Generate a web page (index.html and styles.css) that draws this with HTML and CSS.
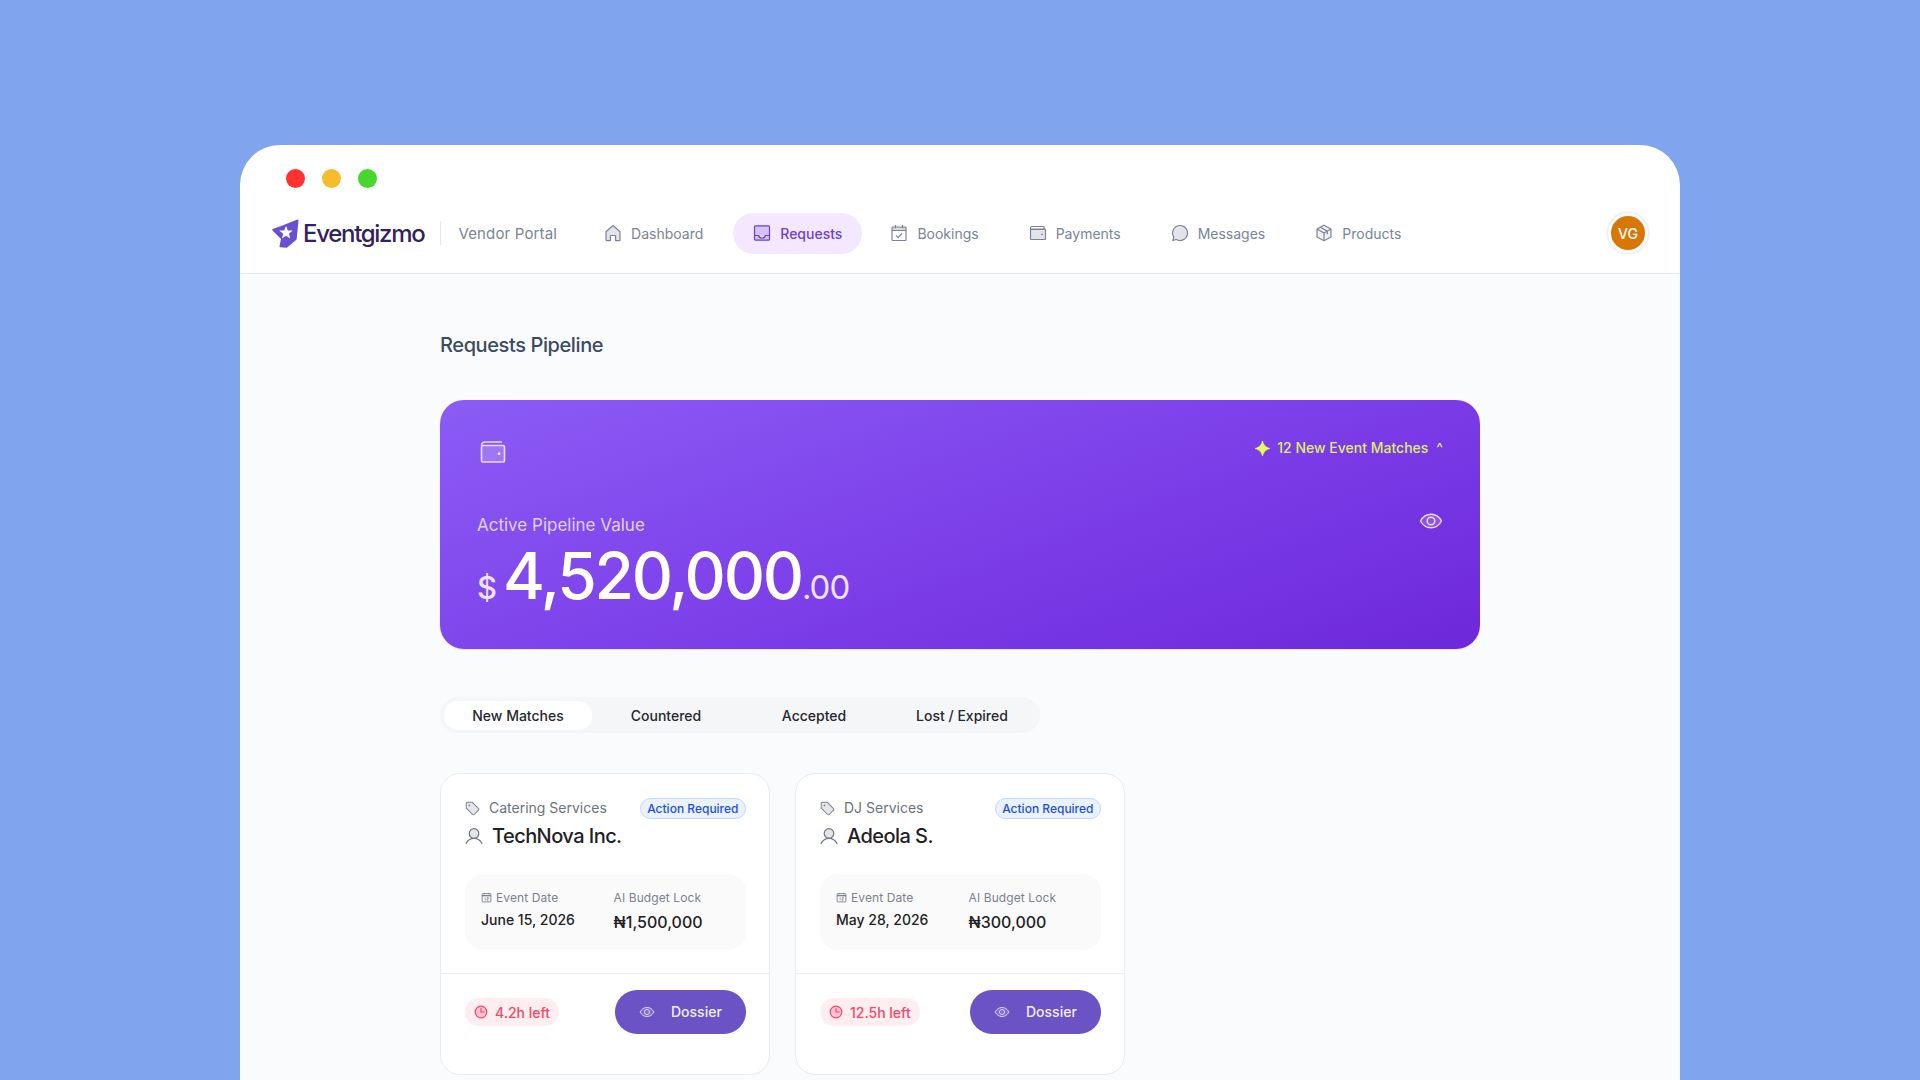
FILE: index.html
```html
<!DOCTYPE html>
<html lang="en">
<head>
<meta charset="utf-8">
<title>Eventgizmo Vendor Portal</title>
<link rel="stylesheet" href="styles.css">
</head>
<body>
<svg class="defs" width="0" height="0" aria-hidden="true">
  <symbol id="i-eye" viewBox="0 0 24 24"><path d="M1.5 12C4 7.5 7.7 5.2 12 5.2S20 7.5 22.500 12C20 16.500 16.300 18.800 12 18.800S4 16.500 1.500 12Z" fill="currentColor" fill-opacity=".2" stroke="currentColor" stroke-width="1.500" stroke-linejoin="round"/><circle cx="12" cy="12" r="3.800" fill="none" stroke="currentColor" stroke-width="1.500"/></symbol>
  <symbol id="i-tag" viewBox="0 0 16 16"><path d="M1.300 2.300a1 1 0 0 1 1-1h5.300l6.800 6.800a1.200 1.200 0 0 1 0 1.700l-4.600 4.600a1.200 1.200 0 0 1-1.700 0L1.300 7.600Z" fill="currentColor" fill-opacity=".2" stroke="currentColor" stroke-width="1.100" stroke-linejoin="round"/><circle cx="4.700" cy="4.700" r=".9" fill="currentColor"/></symbol>
  <symbol id="i-user" viewBox="0 0 18 18"><circle cx="9" cy="6.500" r="4.800" fill="currentColor" fill-opacity=".2" stroke="currentColor" stroke-width="1.200"/><path d="M1 16.500C2.500 13.500 5.500 11.300 9 11.300S15.500 13.500 17 16.500" fill="none" stroke="currentColor" stroke-width="1.200" stroke-linecap="round"/></symbol>
  <symbol id="i-cal" viewBox="0 0 12 12"><rect x="1.200" y="1.800" width="9.600" height="9" rx=".6" fill="none" stroke="currentColor"/><path d="M1.200 4h9.600" stroke="currentColor" stroke-width="1.400"/><path d="M3.500.8v2M8.500.8v2M4.500 6v3M6.500 6h1.500v1.500H6.500V9H8" fill="none" stroke="currentColor" stroke-width=".8"/></symbol>
  <symbol id="i-clock" viewBox="0 0 14 14"><circle cx="7" cy="7" r="5.800" fill="currentColor" fill-opacity=".25" stroke="currentColor" stroke-width="1.200"/><path d="M7 3.600V7h3.200" fill="none" stroke="currentColor" stroke-width="1.200" stroke-linecap="round" stroke-linejoin="round"/></symbol>
</svg>
<div class="window">
  <div class="titlebar">
    <span class="dot dot-red"></span>
    <span class="dot dot-yellow"></span>
    <span class="dot dot-green"></span>
  </div>
  <header class="topnav">
    <div class="brand">
      <svg class="logo" width="27" height="29" viewBox="0 0 26 28"><path d="M1 10.500 9 7.500 24.800 1.200 23 19.500 14 27 8 26.500 9.500 19Z" fill="#6b4fd3" stroke="#6b4fd3" stroke-width="1.600" stroke-linejoin="round"/><path d="M13.500 6.500 15.200 11 20 11.200 16.300 14.200 17.600 18.900 13.500 16.200 9.500 18.900 10.800 14.200 7 11.200 11.800 11Z" fill="#fff"/></svg>
      <span class="brand-name">Eventgizmo</span>
    </div>
    <span class="brand-sep"></span>
    <span class="portal">Vendor Portal</span>
    <nav class="nav">
      <a class="nav-item"><svg class="nav-icon" viewBox="0 0 18 18"><path d="M2 7.800 9 1.500l7 6.300V16a.6.6 0 0 1-.6.600H11.600V11.500H6.400v5.100H2.600A.6.600 0 0 1 2 16Z" fill="currentColor" fill-opacity=".22" stroke="currentColor" stroke-width="1.200" stroke-linejoin="round"/></svg>Dashboard</a>
      <a class="nav-item is-active"><svg class="nav-icon" viewBox="0 0 18 18"><rect x="1.500" y="1.800" width="15" height="14.400" rx="1" fill="currentColor" fill-opacity=".22" stroke="currentColor" stroke-width="1.200"/><path d="M1.500 11.500H5.500C6 13.300 7.300 14 9 14s3-.7 3.500-2.500h4" fill="#f3e8ff" stroke="currentColor" stroke-width="1.200"/></svg>Requests</a>
      <a class="nav-item"><svg class="nav-icon" viewBox="0 0 18 18"><rect x="2" y="3" width="14" height="13.500" rx=".8" fill="none" stroke="currentColor" stroke-width="1.200"/><path d="M2 3h14v3.500H2Z" fill="currentColor" fill-opacity=".3"/><path d="M5.500 1v3.200M12.500 1v3.200M2 6.500h14" stroke="currentColor" stroke-width="1.200"/><path d="M6 11.300 8.200 13.500 12 9.500" fill="none" stroke="currentColor" stroke-width="1.100"/></svg>Bookings</a>
      <a class="nav-item"><svg class="nav-icon" viewBox="0 0 18 18"><path d="M1.500 4A1.500 1.500 0 0 1 3 2.500h12v3H1.500Z" fill="none" stroke="currentColor" stroke-width="1.200"/><rect x="1.500" y="5" width="15" height="10.500" rx=".8" fill="currentColor" fill-opacity=".22" stroke="currentColor" stroke-width="1.200"/><circle cx="13" cy="10.300" r=".9" fill="currentColor"/></svg>Payments</a>
      <a class="nav-item"><svg class="nav-icon" viewBox="0 0 18 18"><path d="M9 1.500a7.500 7.500 0 1 1-3.700 14L1.800 16.500l1-3.400A7.500 7.500 0 0 1 9 1.500Z" fill="currentColor" fill-opacity=".22" stroke="currentColor" stroke-width="1.200" stroke-linejoin="round"/></svg>Messages</a>
      <a class="nav-item"><svg class="nav-icon" viewBox="0 0 18 18"><path d="M9 1.200 16 5v8L9 16.800 2 13V5Z" fill="currentColor" fill-opacity=".12" stroke="currentColor" stroke-width="1.200" stroke-linejoin="round"/><path d="M2 5 9 9l7-4M9 9v7.800M5.300 3.200l7 4v3" fill="none" stroke="currentColor" stroke-width="1.200"/></svg>Products</a>
    </nav>
    <div class="avatar">VG</div>
  </header>
  <main class="content">
    <h1 class="page-title">Requests Pipeline</h1>
    <section class="hero">
      <div class="hero-top">
        <svg class="hero-wallet" width="26" height="24" viewBox="0 0 26 24"><path d="M1.500 5.500A3.500 3.500 0 0 1 5 2h17" fill="none" stroke="#e9ddff" stroke-width="1.600"/><rect x="1.500" y="5.500" width="23" height="16.500" rx="1.400" fill="#fff" fill-opacity=".2" stroke="#e9ddff" stroke-width="1.600"/><circle cx="19" cy="13.700" r="1.300" fill="#fff"/></svg>
        <div class="matches">
          <svg width="15" height="15" viewBox="0 0 14 14"><path d="M7 0C7.800 3.800 10.200 6.200 14 7 10.200 7.800 7.800 10.200 7 14 6.200 10.200 3.800 7.800 0 7 3.800 6.200 6.200 3.800 7 0Z" fill="#e4fb5a" stroke="#e4fb5a" stroke-width=".6" stroke-linejoin="round"/></svg>
          <span>12 New Event Matches</span>
          <span class="caret">^</span>
        </div>
      </div>
      <div class="hero-label-row">
        <span class="hero-label">Active Pipeline Value</span>
        <svg class="hero-eye" width="24" height="24"><use href="#i-eye"/></svg>
      </div>
      <div class="amount"><span class="cur">$</span><span class="big">4,520,000</span><span class="cents">.00</span></div>
    </section>
    <div class="tabs">
      <button class="tab is-active">New Matches</button>
      <button class="tab">Countered</button>
      <button class="tab">Accepted</button>
      <button class="tab">Lost / Expired</button>
    </div>
    <section class="cards">
      <article class="card">
        <div class="card-body">
          <div class="card-head">
            <span class="cat"><svg class="cat-icon" width="15" height="15"><use href="#i-tag"/></svg>Catering Services</span>
            <span class="badge">Action Required</span>
          </div>
          <div class="client"><svg class="client-icon" width="18" height="18"><use href="#i-user"/></svg>TechNova Inc.</div>
          <div class="facts">
            <div>
              <div class="fact-label"><svg class="fact-icon" width="11" height="11"><use href="#i-cal"/></svg>Event Date</div>
              <div class="fact-date">June 15, 2026</div>
            </div>
            <div>
              <div class="fact-label">AI Budget Lock</div>
              <div class="fact-money">₦1,500,000</div>
            </div>
          </div>
        </div>
        <div class="card-foot">
          <span class="timer"><svg width="14" height="14"><use href="#i-clock"/></svg>4.2h left</span>
          <button class="dossier"><svg class="dossier-eye" width="16" height="16"><use href="#i-eye"/></svg>Dossier</button>
        </div>
      </article>
      <article class="card">
        <div class="card-body">
          <div class="card-head">
            <span class="cat"><svg class="cat-icon" width="15" height="15"><use href="#i-tag"/></svg>DJ Services</span>
            <span class="badge">Action Required</span>
          </div>
          <div class="client"><svg class="client-icon" width="18" height="18"><use href="#i-user"/></svg>Adeola S.</div>
          <div class="facts">
            <div>
              <div class="fact-label"><svg class="fact-icon" width="11" height="11"><use href="#i-cal"/></svg>Event Date</div>
              <div class="fact-date">May 28, 2026</div>
            </div>
            <div>
              <div class="fact-label">AI Budget Lock</div>
              <div class="fact-money">₦300,000</div>
            </div>
          </div>
        </div>
        <div class="card-foot">
          <span class="timer"><svg width="14" height="14"><use href="#i-clock"/></svg>12.5h left</span>
          <button class="dossier"><svg class="dossier-eye" width="16" height="16"><use href="#i-eye"/></svg>Dossier</button>
        </div>
      </article>
    </section>
  </main>
</div>
</body>
</html>
```
FILE: styles.css
```css
* { box-sizing: border-box; }
html, body { margin: 0; height: 1080px; overflow: hidden; }
body {
  background: #80a5ee;
  font-family: Inter, "Noto Sans", "Liberation Sans", sans-serif;
  padding-top: 145px;
}
.defs { position: absolute; }
.window {
  width: 1440px;
  height: 935px;
  margin: 0 auto;
  background: #fff;
  border-radius: 40px 40px 0 0;
  display: flex;
  flex-direction: column;
  overflow: hidden;
}
.titlebar { height: 68px; padding: 24px 0 0 46px; display: flex; gap: 17px; flex: none; }
.dot { width: 19px; height: 19px; border-radius: 50%; }
.dot-red { background: #ff3131; }
.dot-yellow { background: #f5bd2e; }
.dot-green { background: #47d72c; }

.topnav {
  flex: none;
  height: 61px;
  padding: 0 32px 20px;
  display: flex;
  align-items: center;
  border-bottom: 1px solid #e9ebef;
}
.brand { display: flex; align-items: center; gap: 4px; }
.logo { display: block; }
.brand-name { font-size: 24px; font-weight: 500; letter-spacing: -1.3px; color: #33205f; }
.brand-sep { width: 1px; height: 24px; background: #e6e8ec; margin: 0 17px 0 16px; }
.portal { font-size: 15px; color: #7a8499; letter-spacing: .15px; }
.nav { display: flex; gap: 10px; margin-left: 27px; }
.nav-item {
  display: flex;
  align-items: center;
  gap: 9px;
  height: 41px;
  padding: 0 20px;
  border-radius: 21px;
  font-size: 14px;
  color: #7a8499;
}
.nav-icon { width: 18px; height: 18px; flex: none; }
.nav-item.is-active { background: #f3e8ff; color: #6d3fd6; font-weight: 500; margin-right: -2px; }
.avatar {
  margin-left: auto;
  width: 40px;
  height: 40px;
  border-radius: 50%;
  background: #d97706;
  border: 3px solid #fff;
  box-shadow: 0 0 3px rgba(0,0,0,.22);
  color: #fff;
  font-size: 14px;
  font-weight: 500;
  display: flex;
  align-items: center;
  justify-content: center;
}

.content { flex: 1; background: #fafbfd; padding: 57px 200px 0; }
.page-title { margin: 0 0 41px; font-size: 20px; line-height: 28px; font-weight: 500; color: #3b4a63; letter-spacing: -.4px; }

.hero {
  height: 249px;
  border-radius: 24px;
  background: linear-gradient(160deg, #8b5cf6 0%, #7a3be6 60%, #6d28d9 100%);
  padding: 40px 37px 0;
  color: #fff;
  box-shadow: 0 1px 2px rgba(0,0,0,.1);
}
.hero-top { display: flex; justify-content: space-between; align-items: flex-start; height: 24px; padding-left: 3px; }
.hero-wallet { display: block; }
.matches { display: flex; align-items: center; gap: 7px; color: #dcef66; font-size: 14px; line-height: 16px; font-weight: 500; }
.caret { margin-left: 1px; font-size: 14px; }
.hero-label-row { display: flex; justify-content: space-between; align-items: center; margin-top: 45px; height: 28px; margin-bottom: 3px; }
.hero-label { font-size: 17px; color: #e0d0fb; margin-top: 4px; }
.hero-eye { color: #e9ddff; margin-top: -4px; }
.amount { display: flex; align-items: baseline; }
.cur { font-size: 31px; font-weight: 500; color: #ece3fe; margin-right: 6px; }
.big { font-size: 64px; line-height: 72px; font-weight: 500; letter-spacing: -2.2px; }
.cents { font-size: 33px; color: #ece3fe; letter-spacing: -1px; }

.tabs {
  margin-top: 48px;
  width: 600px;
  height: 36px;
  padding: 4px;
  border-radius: 18px;
  background: #f5f6f8;
  display: grid;
  grid-template-columns: repeat(4, 148px);
}
.tab {
  border: 0;
  background: none;
  font: 500 14px/1 Inter, "Noto Sans", sans-serif;
  color: #25282e;
  border-radius: 14px;
  padding: 1px 0 0;
  height: 29px;
}
.tab.is-active { background: #fff; }

.cards { margin-top: 40px; display: grid; grid-template-columns: repeat(3, 1fr); gap: 25px; }
.card {
  height: 302px;
  background: #fff;
  border: 1px solid #e8ebf0;
  border-radius: 20px;
}
.card-body { padding: 24px 23px 23px 24px; border-bottom: 1px solid #e9ebef; }
.card-head { display: flex; justify-content: space-between; align-items: center; height: 21px; }
.cat { display: flex; align-items: center; gap: 9px; font-size: 14px; line-height: 18px; color: #6b7280; margin-top: -1px; }
.cat-icon { color: #7c8390; }
.badge {
  height: 21px;
  padding: 0 6.500px;
  border-radius: 11px;
  background: #eaf2ff;
  border: 1px solid #bfd7fd;
  color: #1d4fd8;
  font-size: 12px;
  font-weight: 500;
  line-height: 19px;
}
.client { display: flex; align-items: center; gap: 9px; height: 28px; margin-top: 3px; font-size: 20px; font-weight: 500; color: #1f2125; letter-spacing: -.55px; }
.client-icon { color: #6f7684; }
.facts {
  margin-top: 24px;
  height: 76px;
  padding: 15px 16px 0;
  border-radius: 18px;
  background: #fafafa;
  display: grid;
  grid-template-columns: 1fr 1fr;
  column-gap: 16px;
}
.fact-label { display: flex; align-items: center; gap: 4px; height: 16px; font-size: 12px; color: #7b8190; letter-spacing: .1px; }
.fact-icon { color: #7b8190; }
.fact-date { margin-top: 5px; font-size: 14px; line-height: 20px; font-weight: 500; color: #1f2125; }
.fact-money { margin-top: 6px; font-size: 16px; line-height: 22px; font-weight: 500; color: #1f2125; }
.card-foot { padding: 16px 23px 0 24px; display: flex; justify-content: space-between; align-items: center; }
.timer {
  display: flex;
  align-items: center;
  gap: 7px;
  height: 28px;
  padding: 0 9px;
  border-radius: 14px;
  background: #ffeef0;
  color: #f4476b;
  font-size: 14px;
  font-weight: 500;
}
.dossier {
  width: 131px;
  height: 44px;
  border: 0;
  border-radius: 22px;
  background: #6b52c5;
  color: #f3effd;
  font: 500 14px/1 Inter, "Noto Sans", sans-serif;
  display: flex;
  align-items: center;
  gap: 16px;
  padding: 0 0 0 24px;
}
.dossier-eye { color: #dcd4f7; }
```
